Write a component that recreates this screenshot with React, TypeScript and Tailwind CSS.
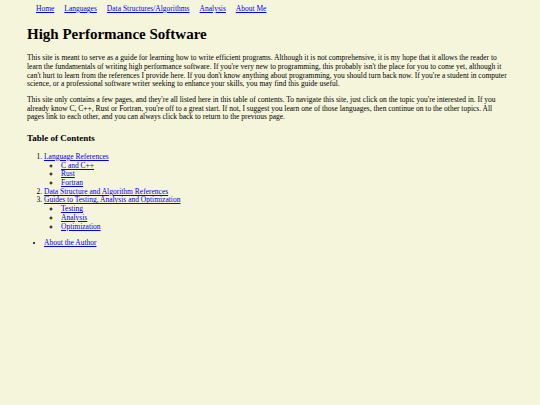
const nav = ['Home', 'Languages', 'Data Structures/Algorithms', 'Analysis', 'About Me']

const toc = [
  { title: 'Language References', children: ['C and C++', 'Rust', 'Fortran'] },
  { title: 'Data Structure and Algorithm References', children: [] },
  { title: 'Guides to Testing, Analysis and Optimization', children: ['Testing', 'Analysis', 'Optimization'] }
]

const link = 'text-[#0000ee] underline'

export default function App() {
  return (
    <main className="min-h-[405px] bg-[#f5f5dc] pl-[27px] pr-[30px] pt-[5px] pb-4 font-['Liberation_Serif',serif] text-[7.5px] leading-[8.7px] text-black">
      <nav className="flex gap-[10px] pl-[9px]">
        {nav.map((item) => (
          <a key={item} href="#" className={link}>
            {item}
          </a>
        ))}
      </nav>

      <h1 className="mt-[12px] text-[15px] leading-[17px] font-bold">High Performance Software</h1>

      <p className="mt-[11.5px]">
        This site is meant to serve as a guide for learning how to write efficient programs. Although it is not comprehensive, it is my hope that it allows the reader to
        learn the fundamentals of writing high performance software. If you're very new to programming, this probably isn't the place for you to come yet, although it
        can't hurt to learn from the references I provide here. If you don't know anything about programming, you should turn back now. If you're a student in computer
        science, or a professional software writer seeking to enhance your skills, you may find this guide useful.
      </p>

      <p className="mt-[7px]">
        This site only contains a few pages, and they're all listed here in this table of contents. To navigate this site, just click on the topic you're interested in. If you
        already know C, C++, Rust or Fortran, you're off to a great start. If not, I suggest you learn one of those languages, then continue on to the other topics. All
        pages link to each other, and you can always click back to return to the previous page.
      </p>

      <h3 className="mt-[11px] text-[9px] leading-[10.3px] font-bold">Table of Contents</h3>

      <ol className="mt-[9.5px] list-decimal pl-[17px]">
        {toc.map((item) => (
          <li key={item.title}>
            <a href="#" className={link}>
              {item.title}
            </a>
            {item.children.length > 0 && (
              <ul className="pl-[17px] [list-style-type:circle]">
                {item.children.map((child) => (
                  <li key={child}>
                    <a href="#" className={link}>
                      {child}
                    </a>
                  </li>
                ))}
              </ul>
            )}
          </li>
        ))}
      </ol>

      <ul className="mt-[8px] list-disc pl-[17px]">
        <li>
          <a href="#" className={link}>
            About the Author
          </a>
        </li>
      </ul>
    </main>
  )
}
